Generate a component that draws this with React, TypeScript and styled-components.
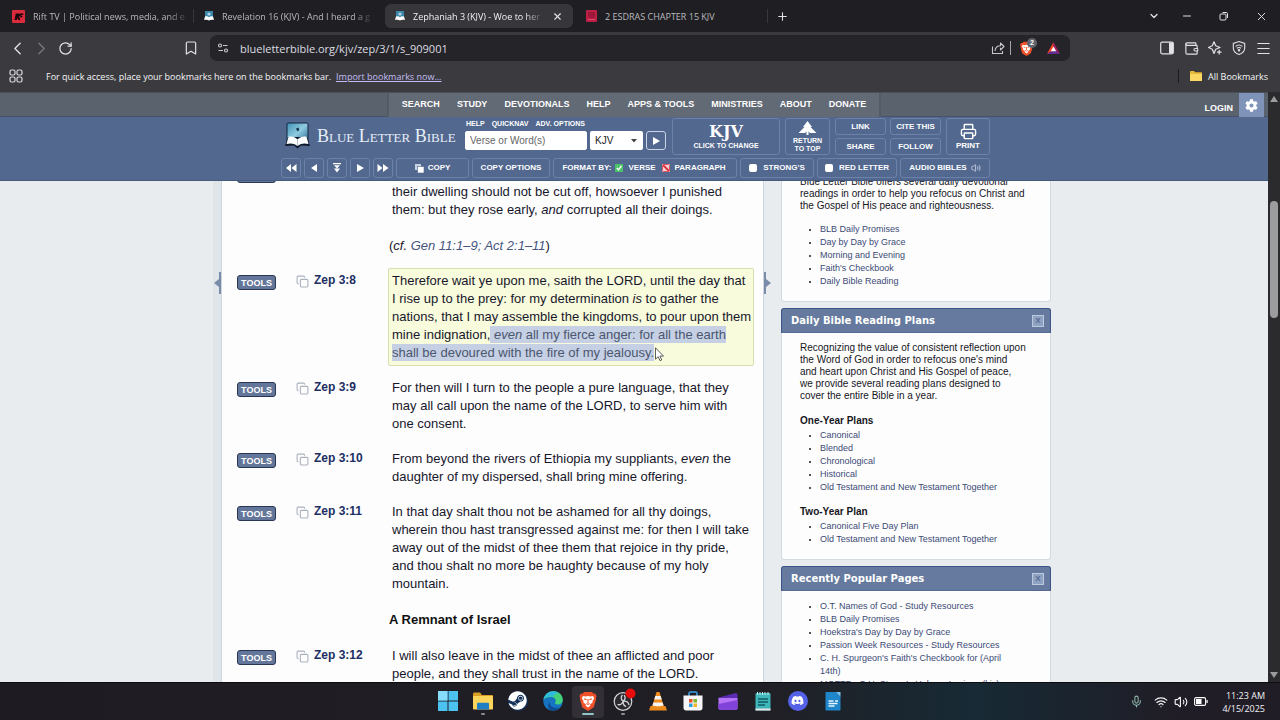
import React from 'react';
import styled, { createGlobalStyle } from 'styled-components';
import {
  Bookmark, ChevronDown, ChevronLeft, ChevronRight, Mic, Minus, Plus, Printer,
  RotateCw, Volume2, Wallet, Wifi, X, Copy as CopyIcon, Menu,
} from 'lucide-react';
import { FaCog, FaDiscord, FaSteam } from 'react-icons/fa';

const ui = '"Open Sans", "Noto Sans", sans-serif';
const sans = '"Liberation Sans", Arial, sans-serif';

const GlobalStyle = createGlobalStyle`
  *, *::before, *::after { box-sizing: border-box; }
  body { margin: 0; background: #1e1e22; font-family: ${sans}; }
  button, input, select { font: inherit; color: inherit; margin: 0; }
  button { border: 0; background: none; padding: 0; }
  a { color: inherit; text-decoration: none; }
  svg { display: block; flex: none; }
`;

const Screen = styled.div`
  display: flex;
  flex-direction: column;
  height: 100vh;
  overflow: hidden;
`;

/* ---------- browser chrome ---------- */

const TabStrip = styled.div`
  display: flex;
  align-items: center;
  height: 32px;
  padding-left: 2px;
  background: #1f1f23;
  font-family: ${ui};
  font-size: 9px;
  color: #b9b9bd;
`;

const Tab = styled.div<{ $active?: boolean }>`
  display: flex;
  align-items: center;
  gap: 8px;
  flex: 0 1 188px;
  height: 24px;
  padding: 0 10px;
  margin-right: 3px;
  min-width: 0;
  border-radius: 6px;
  background: ${p => (p.$active ? '#37373b' : 'transparent')};
  color: ${p => (p.$active ? '#f1f1f3' : 'inherit')};
`;

const TabTitle = styled.span<{ $fade?: boolean }>`
  flex: ${p => (p.$fade ? 'none' : 1)};
  white-space: nowrap;
  mask-image: ${p => (p.$fade ? 'linear-gradient(to right, #000 88%, rgba(0, 0, 0, 0.2))' : 'none')};
`;

const CloseTab = styled.button`
  margin-left: auto;
  color: #e2e2e5;
`;

const Rule = styled.span<{ $h?: number; $color?: string }>`
  width: 1px;
  height: ${p => p.$h ?? 14}px;
  background: ${p => p.$color ?? '#38383c'};
`;

const IconButton = styled.button<{ $w?: number }>`
  display: flex;
  align-items: center;
  justify-content: center;
  width: ${p => p.$w ?? 24}px;
  height: 24px;
  color: #e2e2e5;
`;

const WindowControls = styled.div`
  display: flex;
  gap: 13px;
  margin-left: auto;
  padding-right: 7px;
`;

const Toolbar = styled.div`
  display: flex;
  align-items: center;
  height: 32px;
  background: #3b3b3f;
`;

const ToolbarSide = styled.div<{ $end?: boolean }>`
  display: flex;
  align-items: center;
  justify-content: ${p => (p.$end ? 'flex-end' : 'flex-start')};
  width: 210px;
  padding: 0 5px;
`;

const Spacer = styled.span`
  flex: 1;
`;

const AddressBar = styled.div`
  display: flex;
  align-items: center;
  flex: 1;
  height: 26px;
  padding: 0 5px;
  border-radius: 7px;
  background: #252529;
`;

const AddressInput = styled.input`
  flex: 1;
  min-width: 0;
  padding: 0 0 0 9px;
  border: 0;
  outline: 0;
  background: none;
  font-family: ${ui};
  font-size: 11px;
  color: #dcdce0;
`;

const ShieldButton = styled(IconButton)`
  position: relative;
`;

const ShieldCount = styled.span`
  position: absolute;
  top: 2px;
  left: 16px;
  width: 10px;
  height: 10px;
  border-radius: 5px;
  background: #5e646d;
  font: bold 7px/10px ${sans};
  color: #fff;
  text-align: center;
`;

const BookmarkBar = styled.div`
  display: flex;
  align-items: center;
  height: 28px;
  padding: 0 12px 4px 9px;
  background: #3b3b3f;
  font-family: ${ui};
  font-size: 9px;
  color: #f4f4f6;
`;

const BookmarkHint = styled.span`
  margin-left: 23px;
`;

const ImportLink = styled.a`
  margin-left: 5px;
  color: #c3bdf3;
  text-decoration: underline;
`;

const AllBookmarks = styled.button`
  display: flex;
  align-items: center;
  gap: 6px;
  margin-left: 11px;
`;

/* ---------- page frame ---------- */

const Viewport = styled.div`
  display: flex;
  flex: 1;
  min-height: 0;
`;

const Page = styled.div`
  display: flex;
  flex-direction: column;
  flex: 1;
  min-width: 0;
  background: #e8ecef;
`;

const ScrollTrack = styled.div`
  display: flex;
  flex-direction: column;
  align-items: center;
  width: 12px;
  padding: 4px 0;
  background: #2b2b2e;
`;

const ScrollThumb = styled.div`
  width: 8px;
  height: 117px;
  margin-top: 99px;
  border-radius: 4px;
  background: #9c9c9f;
`;

const SiteNav = styled.nav`
  display: grid;
  grid-template-columns: 1fr auto 1fr;
  height: 25px;
  border-top: 1px solid #4a5059;
  border-bottom: 1px solid #46526a;
  background: #5a626d;
  color: #fff;
  font-size: 9px;
  font-weight: bold;
`;

const NavLinks = styled.div`
  grid-column: 2;
  display: flex;
  gap: 17px;
  padding: 0 13px;
  border: solid #535b66;
  border-width: 0 2px;
  background: #626a75;
  line-height: 22px;
`;

const NavAccount = styled.div`
  display: flex;
  justify-content: flex-end;
  align-items: center;
  gap: 6px;
  padding-right: 4px;
`;

const LoginLink = styled.a`
  padding-top: 6px;
`;

const GearButton = styled.button`
  display: flex;
  align-items: center;
  justify-content: center;
  width: 25px;
  height: 24px;
  background: #7f93b9;
  color: #fff;
`;

const SiteHeader = styled.header`
  flex: none;
  height: 64px;
  background: #52688f;
  border-bottom: 1px solid #465a80;
  color: #fff;
`;

const HeaderInner = styled.div`
  display: flex;
  flex-direction: column;
  gap: 3px;
  width: 714px;
  margin: 0 auto;
  padding: 1px 0 0 4px;
`;

const HeaderRow = styled.div`
  display: flex;
  align-items: stretch;
  gap: 5px;
  height: 37px;
`;

const Brand = styled.a`
  display: flex;
  align-items: center;
  gap: 6px;
  width: 179px;
  padding: 0 0 2px 3px;
  font: 18px/20px "Liberation Serif", serif;
  font-variant: small-caps;
  color: #e6eef8;
  white-space: nowrap;
`;

const Search = styled.form`
  display: flex;
  flex-direction: column;
  gap: 3px;
  width: 202px;
  padding-top: 1px;
`;

const SearchLinks = styled.div`
  display: flex;
  gap: 7px;
  padding-left: 1px;
  font: bold 7px/9px ${sans};
`;

const SearchFields = styled.div`
  display: flex;
  gap: 3px;
  height: 19px;
`;

const VerseInput = styled.input`
  width: 122px;
  padding: 0 4px;
  border: 1px solid #fff;
  border-radius: 2px;
  background: #fff;
  font-size: 10px;
  color: #222;
  &::placeholder { color: #666; opacity: 1; }
`;

const SelectWrap = styled.span`
  position: relative;
  display: flex;
  width: 53px;
  color: #222;
`;

const VersionSelect = styled.select`
  appearance: none;
  width: 100%;
  padding: 0 5px;
  border: 0;
  border-radius: 2px;
  background: #fff;
  font-size: 10px;
`;

const SelectArrow = styled.svg`
  position: absolute;
  top: 8px;
  right: 6px;
`;

const Pill = styled.button<{ $w: number }>`
  display: flex;
  align-items: center;
  justify-content: center;
  gap: 4px;
  width: ${p => p.$w}px;
  border: 1px solid #6d82aa;
  border-radius: 3px;
  background: #52688f;
  font: bold 8px/10px ${sans};
  color: #fff;
  white-space: nowrap;
`;

const GoButton = styled(Pill)`
  border-color: #c9d4e6;
`;

const StackPill = styled(Pill)<{ $small?: boolean }>`
  flex-direction: column;
  gap: 2px;
  font-size: ${p => (p.$small ? 7 : 8)}px;
  line-height: 8px;
`;

const VersionName = styled.span`
  font: bold 16px/16px "DejaVu Serif", serif;
`;

const LinkGrid = styled.div`
  display: grid;
  grid-template-columns: 51px 51px;
  grid-template-rows: 17px 17px;
  gap: 3px 4px;
`;

const ToolRow = styled.div`
  display: flex;
  gap: 3px;
  height: 20px;
`;

const PillGroup = styled.div`
  display: flex;
  align-items: center;
  justify-content: center;
  gap: 4px;
  width: 184px;
  border: 1px solid #6d82aa;
  border-radius: 3px;
  font: bold 8px/10px ${sans};
  white-space: nowrap;
`;

const CheckPill = styled.label<{ $w: number }>`
  display: flex;
  align-items: center;
  justify-content: center;
  gap: 6px;
  width: ${p => p.$w}px;
  border: 1px solid #6d82aa;
  border-radius: 3px;
  font: bold 8px/10px ${sans};
  white-space: nowrap;
`;

const Box = styled.input`
  appearance: none;
  width: 8px;
  height: 8px;
  margin: 0;
  border-radius: 2px;
  background: #fff;
`;

const FormatOption = styled.button`
  display: flex;
  align-items: center;
  gap: 5px;
  margin-right: 2px;
  font: inherit;
`;

/* ---------- content ---------- */

const Content = styled.div`
  flex: 1;
  min-height: 0;
  overflow: hidden;
`;

const Columns = styled.div`
  display: flex;
  width: 842px;
  margin: -20px auto 0;
`;

const Gutter = styled.div<{ $w: number; $right?: boolean }>`
  display: flex;
  justify-content: ${p => (p.$right ? 'flex-start' : 'flex-end')};
  width: ${p => p.$w}px;
  padding-top: 111px;
  background: ${p => (p.$right ? 'none' : '#e0e5e9')};
`;

const Chapter = styled.main`
  display: flex;
  flex-direction: column;
  gap: 9px;
  width: 543px;
  min-height: 540px;
  padding: 0 9px 0 15px;
  border: solid #cdd6de;
  border-width: 0 1px;
  background: #fdfdfe;
  color: #17172b;
  font-size: 13px;
  line-height: 18px;
`;

const VerseRow = styled.article`
  display: grid;
  grid-template-columns: 59px 18px 74px minmax(0, 1fr);
  align-items: start;
`;

const ToolsButton = styled.button`
  width: 39px;
  height: 15px;
  margin-top: 7px;
  border: 1px solid #2a3655;
  border-radius: 3px;
  background: #64779a;
  font: bold 9px/12px ${sans};
  color: #fff;
`;

const CopyButton = styled.button`
  margin-top: 7px;
  color: #a9b1bd;
`;

const VerseRef = styled.a`
  margin-top: 3px;
  font: bold 12px/18px ${sans};
  color: #1c2f63;
`;

const VerseText = styled.p<{ $marked?: boolean }>`
  margin: 0;
  padding: 3px;
  border: 1px solid ${p => (p.$marked ? '#d8dfae' : 'transparent')};
  border-radius: 2px;
  background: ${p => (p.$marked ? '#f8fbdc' : 'none')};
  white-space: nowrap;
`;

const Selected = styled.span`
  padding: 1px 0;
  background: #c5d0e4;
  color: #4b566f;
`;

const CrossRef = styled.span`
  display: block;
  margin: 18px 0 0 -3px;
  a { color: #46557d; }
`;

const SectionTitle = styled.h3`
  margin: 5px 0 5px 152px;
  font-size: 13px;
  line-height: 18px;
  color: #111;
`;

const Sidebar = styled.aside`
  display: flex;
  flex-direction: column;
  gap: 6px;
  width: 270px;
`;

const Card = styled.section`
  border: 1px solid #d3dae0;
  border-top: 0;
  border-radius: 3px;
  background: #fdfdfe;
  color: #16161c;
  font-size: 10px;
  line-height: 12px;
`;

const CardHead = styled.header`
  display: flex;
  align-items: center;
  justify-content: space-between;
  height: 25px;
  margin: 0 -1px;
  padding: 0 6px 0 9px;
  border: 1px solid #3d5488;
  border-bottom-color: #566b92;
  border-radius: 3px 3px 0 0;
  background: #657a9e;
  color: #fff;
`;

const CardTitle = styled.h2`
  margin: 0;
  font: bold 10px/14px "DejaVu Sans", Verdana, sans-serif;
`;

const CloseButton = styled.button`
  width: 12px;
  height: 12px;
  border: 1px solid #bccae0;
  background: #8fa2c2;
  font: bold 8px/9px ${sans};
  color: #566b92;
`;

const CardBody = styled.div<{ $top: number }>`
  padding: ${p => p.$top}px 16px 13px 18px;
`;

const Para = styled.p`
  margin: 0 0 11px;
  white-space: nowrap;
`;

const PlanTitle = styled.h4`
  margin: 10px 0 0;
  font-size: 10px;
  line-height: 16px;
`;

const Links = styled.ul`
  margin: 0;
  padding: 0 18px 0 20px;
  font-size: 9px;
  line-height: 13px;
  li::marker { font-size: 7px; }
  a { color: #3c4a75; }
`;

/* ---------- taskbar ---------- */

const Taskbar = styled.footer`
  flex: none;
  display: grid;
  grid-template-columns: 1fr auto 1fr;
  align-items: center;
  height: 38px;
  border-top: 1px solid #0c0c10;
  background: linear-gradient(90deg, #1f1b23 0%, #201f25 60%, #172a35 76%, #1c222c 86%, #211d26 92%);
  color: #f2f2f4;
`;

const Apps = styled.div`
  grid-column: 2;
  display: flex;
  gap: 3px;
`;

const AppButton = styled.button<{ $state?: 'open' | 'active' }>`
  display: flex;
  flex-direction: column;
  align-items: center;
  gap: 2px;
  width: 32px;
  height: 32px;
  padding-top: 5px;
  border-radius: 4px;
  background: ${p => (p.$state === 'active' ? '#322f36' : 'none')};
  &::after {
    content: '';
    width: ${p => (p.$state === 'active' ? 12 : 4)}px;
    height: 2px;
    border-radius: 1px;
    background: ${p => (p.$state === 'active' ? '#8fc4c9' : p.$state ? '#8b8b90' : 'transparent')};
  }
`;

const Tray = styled.div`
  display: flex;
  align-items: center;
  justify-content: flex-end;
  gap: 6px;
  padding-right: 15px;
`;

const MicButton = styled.button`
  margin-right: 5px;
  color: #8fb5a8;
`;

const Clock = styled.time`
  margin-left: 8px;
  font: 9px/13px ${ui};
  text-align: right;
`;

/* ---------- drawings ---------- */

const BlbMark = ({ w, h }: { w: number; h: number }) => (
  <svg width={w} height={h} viewBox="0 0 27 28" aria-hidden="true">
    <defs>
      <linearGradient id="sky" x1="0" y1="0" x2="1" y2="1">
        <stop offset="0" stopColor="#3f8fb6" />
        <stop offset=".5" stopColor="#8fcbe0" />
        <stop offset="1" stopColor="#1f5f8c" />
      </linearGradient>
    </defs>
    <rect x="3" y="1" width="21" height="20" rx="1" fill="url(#sky)" stroke="#12263f" />
    <path d="M12 6.500l2.500-1 .8 2.500-1.800 1.500z" fill="#16324e" />
    <path d="M1 24l3-9h19l3 9-9-.5-3.500 3-3.500-3z" fill="#10192c" />
    <path d="M13.500 17.500C11 14.500 7 14 4.500 14.800L2.500 22c4-1 8-.6 11 2 3-2.600 7-3 11-2l-2-7.200c-2.500-.8-6.500-.3-9 2.700z" fill="#fff" />
    <path d="M13.500 17.500V24" stroke="#9db4c8" strokeWidth=".8" />
  </svg>
);

const TabMark = () => (
  <svg width="10" height="10" viewBox="0 0 10 10" aria-hidden="true">
    <rect x="1" y="0" width="8" height="8" fill="#3d87aa" />
    <circle cx="5" cy="3" r="1.600" fill="#a9d6e6" />
    <path d="M0 9l1-3.500c1.500-.5 3-.2 4 .8 1-1 2.500-1.300 4-.8L10 9c-2-.5-3.700-.3-5 .6C3.700 8.700 2 8.500 0 9z" fill="#fff" />
  </svg>
);

const RiftMark = () => (
  <svg width="13" height="13" viewBox="0 0 13 13" aria-hidden="true">
    <rect width="13" height="13" rx="1" fill="#d92b3c" />
    <path d="M2.500 10l1.300-6.500h3c1.600 0 2 2.300.3 3L8.300 10H6.300L5.400 7.500 4.800 10zM8 3.500h3.500l-.4 1.400H9.600L9.400 6h1.200l-.3 1.300H9.100L8.600 8.500z" fill="#19070b" />
  </svg>
);

const EsdrasMark = () => (
  <svg width="11" height="12" viewBox="0 0 11 12" aria-hidden="true">
    <rect width="11" height="12" rx="1" fill="#bd1f45" />
    <path d="M2 3h7M2 5h7M2.500 7h6" stroke="#7c1030" />
    <path d="M2 9.500h7" stroke="#d64a6a" />
  </svg>
);

const Lion = ({ size }: { size: number }) => (
  <svg width={size} height={size} viewBox="0 0 20 20" aria-hidden="true">
    <path d="M6 1h8l1.500 1.700 1.700-.2L18.500 5l-.6 2 .2 1-2 7.300c-.3 1-1 1.500-1.700 2L10 20l-4.400-2.700c-.8-.5-1.400-1-1.700-2L1.900 8l.2-1-.6-2 1.300-2.500 1.700.2z" fill="#f0502a" />
    <path d="M5 5l2.500.5L10 5l2.500.5L15 5l1.200 2.300-1.800 3 .3 1.200-2.500 1.700.1 1.500L10 16.500l-2.300-1.800.1-1.500-2.500-1.700.3-1.200-1.800-3z" fill="#fff" />
    <path d="M6 7.800l2.600.9M14 7.800l-2.600.9M10 8v4M8.300 12.600L10 13.500l1.700-.9" stroke="#f0502a" strokeWidth="1.100" fill="none" />
  </svg>
);

const Tune = () => (
  <svg width="12" height="12" viewBox="0 0 12 12" fill="none" stroke="#c9c9cd" strokeWidth="1.100" aria-hidden="true">
    <circle cx="3" cy="3.500" r="1.500" /><path d="M6 3.500h4.500M1.500 8.500H6" /><circle cx="9" cy="8.500" r="1.500" />
  </svg>
);

const ShareIcon = () => (
  <svg width="14" height="14" viewBox="0 0 14 14" fill="none" stroke="#c9c9cd" strokeWidth="1.100" aria-hidden="true">
    <path d="M1.500 5.500v7h10V10" /><path d="M4 10c.2-3.500 2.300-5.300 5.500-5.300V2L13 5.500 9.500 9V6.800" strokeLinejoin="round" />
  </svg>
);

const Apps4 = () => (
  <svg width="14" height="14" viewBox="0 0 14 14" fill="none" stroke="#dcdcdf" strokeWidth="1.200" aria-hidden="true">
    {[[1, 1], [8, 1], [1, 8], [8, 8]].map(([x, y]) => <rect key={`${x}${y}`} x={x} y={y} width="5" height="5" rx="1.500" />)}
  </svg>
);

const PanelIcon = () => (
  <svg width="14" height="14" viewBox="0 0 14 14" aria-hidden="true">
    <rect x=".7" y="1.200" width="12.600" height="11.600" rx="1.500" fill="none" stroke="#e2e2e5" strokeWidth="1.200" />
    <path d="M9 1.500h3.500c.5 0 .8.300.8.800v9.400c0 .5-.3.800-.8.800H9z" fill="#e2e2e5" />
  </svg>
);

const LeoIcon = () => (
  <svg width="14" height="14" viewBox="0 0 14 14" fill="none" stroke="#e2e2e5" strokeWidth="1.200" strokeLinejoin="round" aria-hidden="true">
    <path d="M6 .8l1.700 4L12 6.500 7.700 8.200 6 12.500 4.300 8.200.5 6.500l3.800-1.700z" /><path d="M11.200 9v4.500M9 11.200h4.500" />
  </svg>
);

const VpnIcon = () => (
  <svg width="14" height="14" viewBox="0 0 14 14" fill="none" stroke="#e2e2e5" strokeWidth="1.100" aria-hidden="true">
    <path d="M7 .6l5.700 1.800v4.500c0 3-2.400 5.400-5.700 6.600-3.300-1.200-5.700-3.600-5.700-6.600V2.400z" />
    <path d="M3.600 5.400c2.100-1.700 4.700-1.700 6.800 0M4.900 7.300c1.300-1 2.900-1 4.200 0" /><circle cx="7" cy="9.200" r=".7" fill="#e2e2e5" />
  </svg>
);

const Restore = () => (
  <svg width="10" height="10" viewBox="0 0 10 10" fill="none" stroke="#e2e2e5" aria-hidden="true">
    <rect x="1" y="3" width="6" height="6" rx="1" /><path d="M3.500 1.500H7.500c.6 0 1 .4 1 1v4.500" />
  </svg>
);

const Rewards = () => (
  <svg width="13" height="12" viewBox="0 0 13 12" aria-hidden="true">
    <path d="M6.500 0L0 12l6.500-4z" fill="#ff4724" /><path d="M6.500 0L13 12 6.500 8z" fill="#9e1f63" />
    <path d="M0 12h13L6.500 7.500z" fill="#662d91" /><path d="M6.500 4.500L3.800 9.300h5.400z" fill="#fff" />
  </svg>
);

const Folder = () => (
  <svg width="12" height="10" viewBox="0 0 12 10" aria-hidden="true">
    <path d="M0 1c0-.6.4-1 1-1h3l1.200 1.300H11c.6 0 1 .4 1 1V9c0 .6-.4 1-1 1H1c-.6 0-1-.4-1-1z" fill="#e9b93a" />
    <path d="M0 3h12v6c0 .6-.4 1-1 1H1c-.6 0-1-.4-1-1z" fill="#fbd863" />
  </svg>
);

const Glyph = ({ d, w = 12 }: { d: string; w?: number }) => (
  <svg width={w} height="10" viewBox={`0 0 ${w} 10`} fill="#fff" aria-hidden="true"><path d={d} /></svg>
);

const Battery = () => (
  <svg width="14" height="9" viewBox="0 0 14 9" aria-hidden="true">
    <rect x=".6" y=".6" width="11" height="7.800" rx="1.500" fill="none" stroke="#fff" strokeWidth="1.100" />
    <rect x="2" y="2" width="5.500" height="5" fill="#fff" /><rect x="12.500" y="3" width="1.200" height="3" fill="#fff" />
  </svg>
);

const Handle = ({ right }: { right?: boolean }) => (
  <svg width="8" height="22" viewBox="0 0 8 22" fill="#7b8cab" aria-hidden="true">
    {right ? <path d="M0 0h2v7l5 4-5 4v7H0z" /> : <path d="M8 0H6v7l-5 4 5 4v7h2z" />}
  </svg>
);

const Pointer = styled.svg`
  position: absolute;
  top: 347px;
  left: 655px;
`;

const art: Record<string, React.ReactNode> = {
  Start: (
    <><path d="M0 0h9.500v9.500H0zM10.500 0H20v9.500h-9.500zM0 10.500h9.500V20H0zM10.500 10.500H20V20h-9.500z" fill="#4cc2f1" /><path d="M0 0h9.500v9.500H0z" fill="#86ddfb" /></>
  ),
  Files: (
    <><path d="M0 3c0-.8.5-1.500 1.500-1.500H7L9 4h10c.6 0 1 .4 1 1v13H0z" fill="#d99f24" /><path d="M0 5h20v12.500c0 .6-.4 1-1 1H1c-.6 0-1-.4-1-1z" fill="#fbd45c" /><path d="M4 13c0-.8.500-1.300 1.300-1.300h9.400c.8 0 1.300.5 1.300 1.300v5.500H4z" fill="#1f7fc4" /></>
  ),
  Edge: (
    <><circle cx="10" cy="10" r="9.800" fill="#1674c2" /><path d="M.5 8.500C1.500 3.500 5.500.2 10.500.2c5.500 0 9.300 4 9.300 8.300 0 3.200-2.300 5-5 5-2 0-3.200-.8-2.500-2 1.500-3-1-5.500-4.300-5.500C4.500 6 1.500 7 .5 8.500z" fill="#45d07c" /><path d="M.5 8.500C1.500 3.500 5.500.2 10.500.2c2 0 4 .6 5.500 1.800-3 0-5 1-6 4C6.500 5 2.500 6 .5 8.500z" fill="#2fbcdc" /><path d="M6.500 11c.3 4.500 4.500 7 9.500 5.300-1.700 2.200-4.500 3.500-7.500 3.300C4.500 18 4.500 13 6.500 11z" fill="#0d4d94" /></>
  ),
  OBS: (
    <><circle cx="10" cy="10.500" r="8.800" fill="#2a2a2f" stroke="#d5d5d9" strokeWidth="1.200" /><path d="M9.500 4c-2 2-1.500 5 .7 6.200 2-1.500 2.300-4 1-6M4.500 13.500c2.500.8 5-.5 5.700-3.300M16 14c-.5-2.500-3-4-5.800-3.800M10.200 10.200c-.2 2.500 1 4.700 3 5.300" fill="none" stroke="#d5d5d9" strokeWidth="1.300" /><circle cx="17.500" cy="2.500" r="5" fill="#e80c0c" /></>
  ),
  VLC: (
    <><path d="M2.500 15h15l1.500 4.500H1z" fill="#e98a1c" /><path d="M8.500 1h3L16 16c-3 1.500-9 1.500-12 0z" fill="#f08c1a" /><path d="M7.300 5h5.400l1 3.500H6.300zM5.400 11.500h9.200l1 3c-3 1-8.200 1-11.200 0z" fill="#f4f4f4" /></>
  ),
  Store: (
    <><path d="M6 5V2.500C6 1.500 6.500 1 7.500 1h5c1 0 1.500.5 1.500 1.500V5" fill="none" stroke="#3ba2e8" strokeWidth="1.500" /><path d="M.5 4.500h19V17c0 1.500-1 2.500-2.500 2.500H3C1.500 19.500.5 18.500.5 17z" fill="#f5f5f7" /><path d="M6 8h3.500v3.500H6z" fill="#e8502b" /><path d="M10.500 8H14v3.500h-3.500z" fill="#7db72f" /><path d="M6 12.500h3.500V16H6z" fill="#2a9fe0" /><path d="M10.500 12.500H14V16h-3.500z" fill="#f3b52b" /></>
  ),
  Clipchamp: (
    <><path d="M.5 6.500L18 2l1.500 1.200V8H.5z" fill="#5b2bb3" /><path d="M.5 7h19v10c0 1-1 2-2 2h-15c-1 0-2-1-2-2z" fill="#b574f5" /><path d="M.5 13l19-4v8c0 1-1 2-2 2h-15c-1 0-2-1-2-2z" fill="#8243d8" /></>
  ),
  Notepad: (
    <><rect x="2.500" y="2" width="15" height="17.500" rx="1" fill="#3fb6b9" /><path d="M4.500 1v3M7 1v3M9.500 1v3M12 1v3M15 1v3" stroke="#c7f1f0" /><path d="M5 8h10M5 11h10M5 14h7" stroke="#135c66" strokeWidth="1.400" /><path d="M2.500 17.500h15v2h-15z" fill="#e9e2e2" /></>
  ),
  Writer: (
    <><path d="M2.500 2c0-.6.400-1 1-1H13l4.500 5v12.500c0 .6-.4 1-1 1h-13c-.6 0-1-.4-1-1z" fill="#1f86c9" /><path d="M13 1h4.500v5z" fill="#78c4ef" /><path d="M5.500 10h5M5.500 12.500h9M5.500 15h6M12 10h3" stroke="#e6f5fd" strokeWidth="1.300" /></>
  ),
};

const Art = ({ name }: { name: string }) => (
  <svg width="20" height="20" viewBox="0 0 20 20" overflow="visible" aria-hidden="true">{art[name]}</svg>
);

const Round = styled.span<{ $bg: string }>`
  display: flex;
  align-items: center;
  justify-content: center;
  width: 20px;
  height: 20px;
  border-radius: 10px;
  background: ${p => p.$bg};
  color: #fff;
`;

/* ---------- data ---------- */

interface VerseData { id: string; marked?: boolean; body: React.ReactNode }

const beforeHeading: VerseData[] = [
  {
    id: '3:7',
    body: (
      <>
        I said, Surely thou wilt fear me, thou wilt receive instruction; so<br />
        their dwelling should not be cut off, howsoever I punished<br />
        them: but they rose early, <i>and</i> corrupted all their doings.
        <CrossRef>(<i>cf. <a href="#refs">Gen 11:1–9; Act 2:1–11</a></i>)</CrossRef>
      </>
    ),
  },
  {
    id: '3:8',
    marked: true,
    body: (
      <>
        Therefore wait ye upon me, saith the LORD, until the day that<br />
        I rise up to the prey: for my determination <i>is</i> to gather the<br />
        nations, that I may assemble the kingdoms, to pour upon them<br />
        mine indignation,<Selected> <i>even</i> all my fierce anger: for all the earth<br />
        shall be devoured with the fire of my jealousy.</Selected>
      </>
    ),
  },
  {
    id: '3:9',
    body: (
      <>
        For then will I turn to the people a pure language, that they<br />
        may all call upon the name of the LORD, to serve him with<br />
        one consent.
      </>
    ),
  },
  {
    id: '3:10',
    body: (
      <>
        From beyond the rivers of Ethiopia my suppliants, <i>even</i> the<br />
        daughter of my dispersed, shall bring mine offering.
      </>
    ),
  },
  {
    id: '3:11',
    body: (
      <>
        In that day shalt thou not be ashamed for all thy doings,<br />
        wherein thou hast transgressed against me: for then I will take<br />
        away out of the midst of thee them that rejoice in thy pride,<br />
        and thou shalt no more be haughty because of my holy<br />
        mountain.
      </>
    ),
  },
];

const afterHeading: VerseData[] = [
  {
    id: '3:12',
    body: (
      <>
        I will also leave in the midst of thee an afflicted and poor<br />
        people, and they shall trust in the name of the LORD.
      </>
    ),
  },
];

const Verse = ({ v }: { v: VerseData }) => (
  <VerseRow>
    <ToolsButton>TOOLS</ToolsButton>
    <CopyButton aria-label={`Copy Zep ${v.id}`}><CopyIcon size={13} strokeWidth={2} /></CopyButton>
    <VerseRef href="#verse">Zep {v.id}</VerseRef>
    <VerseText $marked={v.marked}>{v.body}</VerseText>
  </VerseRow>
);

const LinkList = ({ items }: { items: string[] }) => (
  <Links>{items.map(t => <li key={t}><a href="#page">{t}</a></li>)}</Links>
);

const Head = ({ title }: { title: string }) => (
  <CardHead><CardTitle>{title}</CardTitle><CloseButton aria-label={`Close ${title}`}>X</CloseButton></CardHead>
);

export default function App() {
  return (
    <Screen>
      <GlobalStyle />
      <TabStrip>
        <Tab><RiftMark /><TabTitle $fade>Rift TV | Political news, media, and e</TabTitle></Tab>
        <Rule />
        <Tab><TabMark /><TabTitle $fade>Revelation 16 (KJV) - And I heard a g</TabTitle></Tab>
        <Tab $active>
          <TabMark /><TabTitle $fade>Zephaniah 3 (KJV) - Woe to her</TabTitle>
          <CloseTab aria-label="Close tab"><X size={11} strokeWidth={2.500} /></CloseTab>
        </Tab>
        <Tab><EsdrasMark /><TabTitle>2 ESDRAS CHAPTER 15 KJV</TabTitle></Tab>
        <Rule />
        <IconButton $w={28} aria-label="New tab"><Plus size={13} /></IconButton>
        <WindowControls>
          <IconButton $w={16} aria-label="Search tabs"><ChevronDown size={12} strokeWidth={2.500} /></IconButton>
          <IconButton aria-label="Minimize"><Minus size={12} /></IconButton>
          <IconButton aria-label="Restore"><Restore /></IconButton>
          <IconButton aria-label="Close"><X size={13} strokeWidth={1.800} /></IconButton>
        </WindowControls>
      </TabStrip>

      <Toolbar>
        <ToolbarSide>
          <IconButton aria-label="Back"><ChevronLeft size={21} strokeWidth={1.600} /></IconButton>
          <IconButton aria-label="Forward"><ChevronRight size={21} strokeWidth={1.600} color="#77777c" /></IconButton>
          <IconButton aria-label="Reload"><RotateCw size={15} strokeWidth={2} /></IconButton>
          <Spacer />
          <IconButton $w={28} aria-label="Bookmark"><Bookmark size={16} strokeWidth={1.800} /></IconButton>
        </ToolbarSide>
        <AddressBar>
          <IconButton $w={16} aria-label="Site settings"><Tune /></IconButton>
          <AddressInput aria-label="Address" defaultValue="blueletterbible.org/kjv/zep/3/1/s_909001" />
          <IconButton aria-label="Share"><ShareIcon /></IconButton>
          <Rule $color="#a5a5aa" />
          <ShieldButton $w={30} aria-label="Shields"><Lion size={15} /><ShieldCount>2</ShieldCount></ShieldButton>
          <IconButton aria-label="Rewards"><Rewards /></IconButton>
        </AddressBar>
        <ToolbarSide $end>
          <IconButton aria-label="Sidebar"><PanelIcon /></IconButton>
          <IconButton aria-label="Wallet"><Wallet size={15} strokeWidth={1.800} /></IconButton>
          <IconButton aria-label="Leo"><LeoIcon /></IconButton>
          <IconButton aria-label="VPN"><VpnIcon /></IconButton>
          <IconButton aria-label="Menu"><Menu size={17} strokeWidth={1.600} /></IconButton>
        </ToolbarSide>
      </Toolbar>

      <BookmarkBar>
        <Apps4 />
        <BookmarkHint>For quick access, place your bookmarks here on the bookmarks bar.</BookmarkHint>
        <ImportLink href="#import">Import bookmarks now...</ImportLink>
        <Spacer />
        <Rule $color="#1c1c1f" />
        <AllBookmarks><Folder />All Bookmarks</AllBookmarks>
      </BookmarkBar>

      <Viewport>
        <Page>
          <SiteNav>
            <NavLinks>
              {['SEARCH', 'STUDY', 'DEVOTIONALS', 'HELP', 'APPS & TOOLS', 'MINISTRIES', 'ABOUT', 'DONATE'].map(t => (
                <a key={t} href="#nav">{t}</a>
              ))}
            </NavLinks>
            <NavAccount>
              <LoginLink href="#login">LOGIN</LoginLink>
              <GearButton aria-label="Settings"><FaCog size={13} /></GearButton>
            </NavAccount>
          </SiteNav>

          <SiteHeader>
            <HeaderInner>
              <HeaderRow>
                <Brand href="#home"><BlbMark w={27} h={28} />Blue Letter Bible</Brand>
                <Search>
                  <SearchLinks><a href="#h">HELP</a><a href="#q">QUICKNAV</a><a href="#a">ADV. OPTIONS</a></SearchLinks>
                  <SearchFields>
                    <VerseInput aria-label="Verse or Word(s)" placeholder="Verse or Word(s)" />
                    <SelectWrap>
                      <VersionSelect aria-label="Version" defaultValue="KJV"><option>KJV</option></VersionSelect>
                      <SelectArrow width="6" height="4" viewBox="0 0 6 4"><path d="M0 0h6L3 3.500z" fill="#444" /></SelectArrow>
                    </SelectWrap>
                    <GoButton $w={20} type="button" aria-label="Search"><Glyph w={8} d="M1 1l7 4-7 4z" /></GoButton>
                  </SearchFields>
                </Search>
                <StackPill $w={108} $small><VersionName>KJV</VersionName>CLICK TO CHANGE</StackPill>
                <StackPill $w={45} $small>
                  <svg width="19" height="14" viewBox="0 0 18 14" fill="#fff" aria-hidden="true"><path d="M9 0l4.500 6H12l6 6h-6.500L10 10.500V14H8v-3.500L6.500 12H0l6-6H4.500z" /></svg>
                  <span>RETURN<br />TO TOP</span>
                </StackPill>
                <LinkGrid>
                  <Pill $w={51}>LINK</Pill><Pill $w={51}>CITE THIS</Pill>
                  <Pill $w={51}>SHARE</Pill><Pill $w={51}>FOLLOW</Pill>
                </LinkGrid>
                <StackPill $w={44}><Printer size={17} strokeWidth={2} />PRINT</StackPill>
              </HeaderRow>
              <ToolRow>
                <Pill $w={20} aria-label="First"><Glyph d="M6 1v8L1 5zM11.500 1v8l-5-4z" /></Pill>
                <Pill $w={20} aria-label="Previous"><Glyph w={8} d="M7 1v8L1 5z" /></Pill>
                <Pill $w={20} aria-label="Jump down"><Glyph w={8} d="M0 0h8v1.300H0zM1 2.300h6L4 5.500zM1 5.500h6L4 9.500z" /></Pill>
                <Pill $w={20} aria-label="Next"><Glyph w={8} d="M1 1l7 4-7 4z" /></Pill>
                <Pill $w={20} aria-label="Last"><Glyph d="M.5 1l5 4-5 4zM6 1l5.500 4L6 9z" /></Pill>
                <Pill $w={73}>
                  <svg width="9" height="9" viewBox="0 0 9 9" aria-hidden="true"><rect width="6" height="6" fill="#c7d2e4" /><rect x="2.500" y="2.500" width="6.500" height="6.500" fill="#fff" stroke="#52688f" strokeWidth=".6" /></svg>
                  COPY
                </Pill>
                <Pill $w={78}>COPY OPTIONS</Pill>
                <PillGroup>
                  FORMAT BY:
                  <FormatOption>
                    <svg width="8" height="8" viewBox="0 0 8 8" aria-hidden="true"><rect width="8" height="8" rx="1" fill="#4fc36b" /><path d="M1.800 4l1.700 1.800L6.500 2" fill="none" stroke="#fff" strokeWidth="1.300" /></svg>
                    VERSE
                  </FormatOption>
                  <FormatOption>
                    <svg width="8" height="8" viewBox="0 0 8 8" aria-hidden="true"><rect width="8" height="8" rx="1" fill="#f3d3d6" /><path d="M1 1l6 6" stroke="#d9333f" strokeWidth="1.800" /><rect x=".5" y=".5" width="7" height="7" rx="1" fill="none" stroke="#e0505a" /></svg>
                    PARAGRAPH
                  </FormatOption>
                </PillGroup>
                <CheckPill $w={74}><Box type="checkbox" />STRONG'S</CheckPill>
                <CheckPill $w={80}><Box type="checkbox" />RED LETTER</CheckPill>
                <Pill $w={90}>AUDIO BIBLES <Volume2 size={10} color="#cfd8e8" /></Pill>
              </ToolRow>
            </HeaderInner>
          </SiteHeader>

          <Content>
            <Columns>
              <Gutter $w={8}><Handle /></Gutter>
              <Chapter>
                {beforeHeading.map(v => <Verse key={v.id} v={v} />)}
                <SectionTitle>A Remnant of Israel</SectionTitle>
                {afterHeading.map(v => <Verse key={v.id} v={v} />)}
              </Chapter>
              <Gutter $w={17} $right><Handle right /></Gutter>
              <Sidebar>
                <Card>
                  <CardBody $top={15}>
                    <Para>
                      Blue Letter Bible offers several daily devotional<br />
                      readings in order to help you refocus on Christ and<br />
                      the Gospel of His peace and righteousness.
                    </Para>
                    <LinkList items={['BLB Daily Promises', 'Day by Day by Grace', 'Morning and Evening', "Faith's Checkbook", 'Daily Bible Reading']} />
                  </CardBody>
                </Card>
                <Card>
                  <Head title="Daily Bible Reading Plans" />
                  <CardBody $top={9}>
                    <Para>
                      Recognizing the value of consistent reflection upon<br />
                      the Word of God in order to refocus one's mind<br />
                      and heart upon Christ and His Gospel of peace,<br />
                      we provide several reading plans designed to<br />
                      cover the entire Bible in a year.
                    </Para>
                    <PlanTitle>One-Year Plans</PlanTitle>
                    <LinkList items={['Canonical', 'Blended', 'Chronological', 'Historical', 'Old Testament and New Testament Together']} />
                    <PlanTitle>Two-Year Plan</PlanTitle>
                    <LinkList items={['Canonical Five Day Plan', 'Old Testament and New Testament Together']} />
                  </CardBody>
                </Card>
                <Card>
                  <Head title="Recently Popular Pages" />
                  <CardBody $top={9}>
                    <LinkList
                      items={[
                        'O.T. Names of God - Study Resources',
                        'BLB Daily Promises',
                        "Hoekstra's Day by Day by Grace",
                        'Passion Week Resources - Study Resources',
                        "C. H. Spurgeon's Faith's Checkbook for (April 14th)",
                        'MGTTP - C.H. Strong’s Hebrew Lexicon (kjv)',
                      ]}
                    />
                  </CardBody>
                </Card>
              </Sidebar>
            </Columns>
          </Content>
        </Page>
        <ScrollTrack>
          <svg width="8" height="6" viewBox="0 0 8 6" aria-hidden="true"><path d="M4 0l4 6H0z" fill="#9c9c9f" /></svg>
          <ScrollThumb />
          <Spacer />
          <svg width="8" height="6" viewBox="0 0 8 6" aria-hidden="true"><path d="M4 6l4-6H0z" fill="#9c9c9f" /></svg>
        </ScrollTrack>
      </Viewport>

      <Taskbar>
        <Apps>
          <AppButton aria-label="Start"><Art name="Start" /></AppButton>
          <AppButton aria-label="File Explorer" $state="open"><Art name="Files" /></AppButton>
          <AppButton aria-label="Steam"><Round $bg="#12305a"><FaSteam size={19} /></Round></AppButton>
          <AppButton aria-label="Edge"><Art name="Edge" /></AppButton>
          <AppButton aria-label="Brave" $state="active"><Lion size={20} /></AppButton>
          <AppButton aria-label="OBS Studio" $state="open"><Art name="OBS" /></AppButton>
          <AppButton aria-label="VLC"><Art name="VLC" /></AppButton>
          <AppButton aria-label="Store"><Art name="Store" /></AppButton>
          <AppButton aria-label="Clipchamp"><Art name="Clipchamp" /></AppButton>
          <AppButton aria-label="Notepad"><Art name="Notepad" /></AppButton>
          <AppButton aria-label="Discord"><Round $bg="#5562e8"><FaDiscord size={13} /></Round></AppButton>
          <AppButton aria-label="Writer"><Art name="Writer" /></AppButton>
        </Apps>
        <Tray>
          <MicButton aria-label="Microphone in use"><Mic size={13} /></MicButton>
          <Wifi size={14} />
          <Volume2 size={14} />
          <Battery />
          <Clock>11:23 AM<br />4/15/2025</Clock>
        </Tray>
      </Taskbar>

      <Pointer width="9" height="15" viewBox="0 0 9 15" aria-hidden="true">
        <path d="M.5.8v11.400l2.700-2.500 1.800 4 1.700-.8-1.800-3.800h3.600z" fill="#fff" stroke="#333" strokeWidth=".8" />
      </Pointer>
    </Screen>
  );
}
